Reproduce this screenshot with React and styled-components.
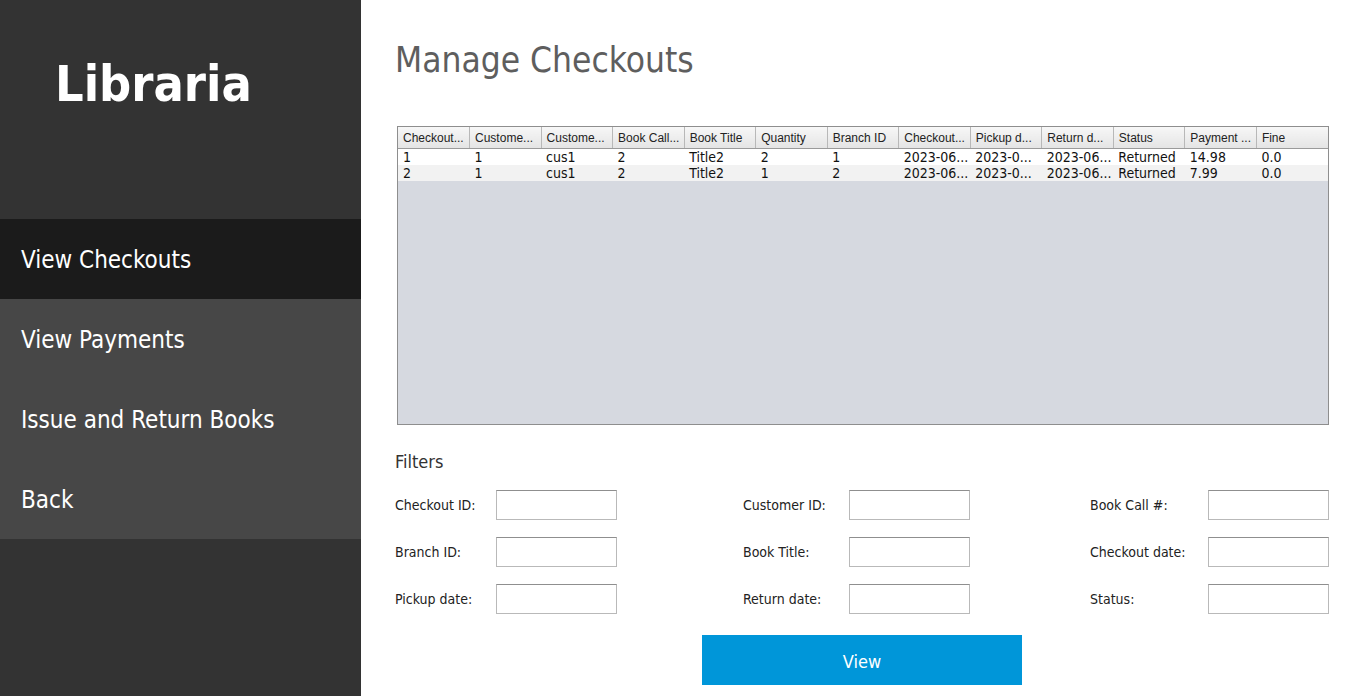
import React from 'react';
import styled, { createGlobalStyle } from 'styled-components';

const GlobalStyle = createGlobalStyle`
  html, body { margin: 0; padding: 0; height: 100%; }
  body { font-family: "DejaVu Sans Condensed", "DejaVu Sans", sans-serif; background: #fff; }
  #root { height: 100%; }
`;

const Page = styled.div`
  display: flex;
  width: 1366px;
  height: 696px;
  overflow: hidden;
`;

const Sidebar = styled.aside`
  width: 361px;
  flex-shrink: 0;
  background: #333333;
  display: flex;
  flex-direction: column;
`;

const Logo = styled.div`
  height: 219px;
  box-sizing: border-box;
  padding: 54px 0 0 55px;
  color: #fff;
  font-size: 50px;
  font-weight: bold;
  line-height: 60px;
`;

const NavItem = styled.div`
  height: 80px;
  display: flex;
  align-items: center;
  padding-left: 21px;
  padding-top: 2px;
  box-sizing: border-box;
  color: #fff;
  font-size: 24px;
  background: ${p => (p.$active ? '#1b1b1b' : '#474747')};
`;

const Main = styled.main`
  flex: 1;
  padding: 38px 37px 0 34px;
  display: flex;
  flex-direction: column;
`;

const Title = styled.h1`
  margin: 0;
  font-size: 35px;
  font-weight: normal;
  color: #5e5e5e;
  line-height: 44px;
`;

const TableBox = styled.div`
  margin: 44px 0 0 2px;
  height: 299px;
  border: 1px solid #8e8e8e;
  background: #d6d9e0;
  box-sizing: border-box;
`;

const Table = styled.table`
  border-collapse: collapse;
  table-layout: fixed;
  width: 100%;
`;

const Th = styled.th`
  height: 21px;
  padding: 0 5px;
  text-align: left;
  font-family: "Liberation Sans", Arial, sans-serif;
  font-size: 12px;
  font-weight: normal;
  color: #222;
  background: linear-gradient(#f7f7f7, #e4e4e4);
  border-right: 1px solid #b8b8b8;
  border-bottom: 1px solid #9a9a9a;
  white-space: nowrap;
  overflow: hidden;
  &:last-child { border-right: none; }
`;

const Tr = styled.tr`
  background: ${p => (p.$alt ? '#f2f2f2' : '#ffffff')};
`;

const Td = styled.td`
  height: 16px;
  padding: 0 5px;
  font-size: 14px;
  color: #111;
  white-space: nowrap;
  overflow: hidden;
  line-height: 16px;
`;

const FiltersTitle = styled.div`
  margin-top: 26px;
  font-size: 18px;
  color: #333;
`;

const FilterGrid = styled.div`
  margin-top: 18px;
  display: grid;
  grid-template-columns: 348px 347px 239px;
  row-gap: 17px;
`;

const Field = styled.div`
  width: ${p => p.$w}px;
  display: flex;
  align-items: center;
  justify-content: space-between;
  height: 30px;
`;

const Label = styled.label`
  font-size: 14px;
  color: #222;
`;

const Input = styled.input`
  width: 121px;
  height: 30px;
  box-sizing: border-box;
  border: 1px solid #b9b9b9;
  border-top-color: #8f8f8f;
  background: #fff;
  padding: 0 4px;
`;

const ButtonRow = styled.div`
  margin-top: 21px;
  display: flex;
  justify-content: center;
`;

const ViewButton = styled.button`
  width: 320px;
  height: 50px;
  border: none;
  padding: 2px 0 0;
  background: #0096d9;
  color: #fff;
  font-family: inherit;
  font-size: 18px;
`;

const columns = [
  'Checkout...', 'Custome...', 'Custome...', 'Book Call...', 'Book Title', 'Quantity',
  'Branch ID', 'Checkout...', 'Pickup d...', 'Return d...', 'Status', 'Payment ...', 'Fine',
];

const rows = [
  ['1', '1', 'cus1', '2', 'Title2', '2', '1', '2023-06...', '2023-0...', '2023-06...', 'Returned', '14.98', '0.0'],
  ['2', '1', 'cus1', '2', 'Title2', '1', '2', '2023-06...', '2023-0...', '2023-06...', 'Returned', '7.99', '0.0'],
];

const widths = [222, 227, 239];

const filters = [
  'Checkout ID:', 'Customer ID:', 'Book Call #:',
  'Branch ID:', 'Book Title:', 'Checkout date:',
  'Pickup date:', 'Return date:', 'Status:',
];

export default function App() {
  return (
    <>
      <GlobalStyle />
      <Page>
        <Sidebar>
          <Logo>Libraria</Logo>
          <NavItem $active>View Checkouts</NavItem>
          <NavItem>View Payments</NavItem>
          <NavItem>Issue and Return Books</NavItem>
          <NavItem>Back</NavItem>
        </Sidebar>
        <Main>
          <Title>Manage Checkouts</Title>
          <TableBox>
            <Table>
              <thead>
                <tr>
                  {columns.map((c, i) => <Th key={i}>{c}</Th>)}
                </tr>
              </thead>
              <tbody>
                {rows.map((r, i) => (
                  <Tr key={i} $alt={i % 2 === 1}>
                    {r.map((v, j) => <Td key={j}>{v}</Td>)}
                  </Tr>
                ))}
              </tbody>
            </Table>
          </TableBox>
          <FiltersTitle>Filters</FiltersTitle>
          <FilterGrid>
            {filters.map((f, i) => (
              <Field key={f} $w={widths[i % 3]}>
                <Label>{f}</Label>
                <Input />
              </Field>
            ))}
          </FilterGrid>
          <ButtonRow>
            <ViewButton>View</ViewButton>
          </ButtonRow>
        </Main>
      </Page>
    </>
  );
}
